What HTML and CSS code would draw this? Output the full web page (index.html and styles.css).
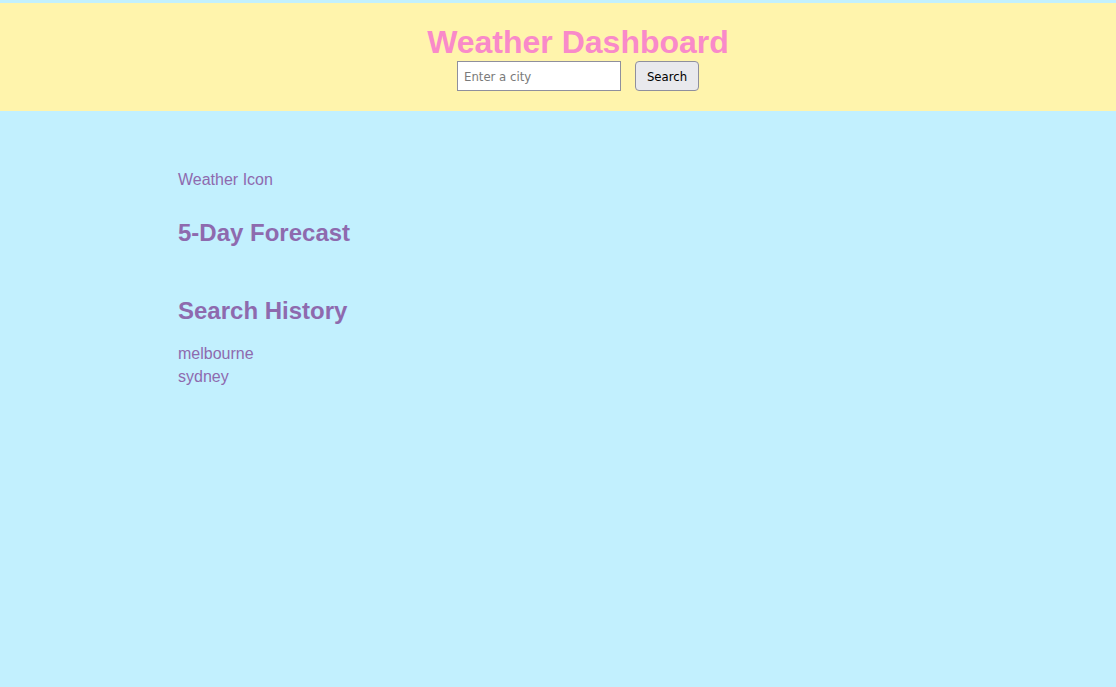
FILE: index.html
```html
<!DOCTYPE html>
<html lang="en">
<head>
<meta charset="utf-8">
<title>Weather Dashboard</title>
<link rel="stylesheet" href="styles.css">
</head>
<body>
<header class="header">
  <h1 class="title">Weather Dashboard</h1>
  <form class="search-form">
    <input class="city-input" type="text" placeholder="Enter a city">
    <button class="search-btn" type="button">Search</button>
  </form>
</header>
<main class="container">
  <section class="current">
    <p class="weather-icon">Weather Icon</p>
  </section>
  <section class="forecast">
    <h2 class="section-title">5-Day Forecast</h2>
  </section>
  <section class="history">
    <h2 class="section-title">Search History</h2>
    <ul class="history-list">
      <li class="history-item">melbourne</li>
      <li class="history-item">sydney</li>
    </ul>
  </section>
</main>
</body>
</html>
```
FILE: styles.css
```css
html, body {
  margin: 0;
  padding: 0;
}
body {
  background: #c2f0fe;
  padding-top: 3px;
  font-family: "Liberation Sans", Arial, sans-serif;
  color: #8e6aae;
}
.header {
  background: #fff4ac;
  text-align: center;
  padding: 21px 0 20px 40px;
}
.title {
  margin: 0;
  font-size: 32px;
  line-height: 37px;
  font-weight: bold;
  color: #f98ac9;
}
.search-form {
  display: flex;
  justify-content: center;
  gap: 14px;
}
.city-input {
  box-sizing: border-box;
  width: 164px;
  height: 30px;
  border: 1px solid #8f8f9d;
  border-radius: 0;
  padding: 0 6px;
  font-family: "DejaVu Sans Condensed", "DejaVu Sans", sans-serif;
  font-size: 13px;
  background: #fff;
  color: #000;
}
.city-input::placeholder {
  color: #7a7a7a;
}
.search-btn {
  box-sizing: border-box;
  width: 64px;
  height: 30px;
  border: 1px solid #8f8f9d;
  border-radius: 4px;
  background: #e9e9ed;
  color: #000;
  font-family: "DejaVu Sans Condensed", "DejaVu Sans", sans-serif;
  font-size: 13px;
  padding: 0;
}
.container {
  max-width: 760px;
  margin: 0 auto;
  padding-top: 60px;
}
.weather-icon {
  margin: 0;
  font-size: 16px;
  line-height: 18px;
}
.section-title {
  margin: 0;
  font-size: 24px;
  line-height: 28px;
  font-weight: bold;
}
.forecast {
  margin-top: 30px;
}
.history {
  margin-top: 50px;
}
.history-list {
  list-style: none;
  margin: 17px 0 0;
  padding: 0;
}
.history-item {
  font-size: 16px;
  line-height: 23px;
}
```
